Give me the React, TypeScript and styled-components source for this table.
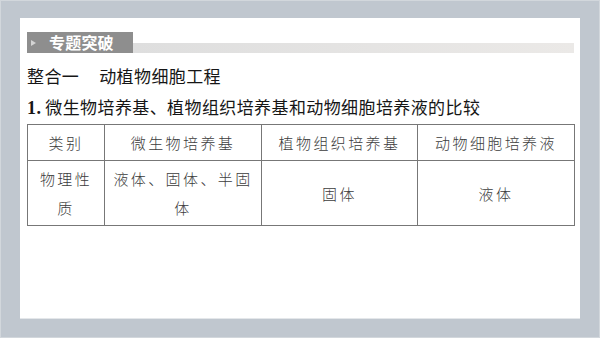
import React from "react";
import styled, { createGlobalStyle } from "styled-components";

const Global = createGlobalStyle`
  html, body { margin: 0; padding: 0; background: #c0c7cf; }
  * { box-sizing: border-box; }
`;

const Frame = styled.div`
  width: 600px;
  height: 338px;
  background: #c0c7cf;
  border: 1px solid #d2d7dc;
  padding: 17px 19px 0 19px;
  font-family: "Noto Sans CJK SC", "Noto Sans", sans-serif;
`;

const Panel = styled.div`
  width: 560px;
  height: 301px;
  background: #ffffff;
  border-bottom: 1px solid #e4e7ea;
  padding: 14px 6px 0 7px;
  display: flex;
  flex-direction: column;
`;

const HeaderRow = styled.div`
  display: flex;
  align-items: flex-end;
  height: 21px;
`;

const Tag = styled.div`
  width: 106px;
  height: 21px;
  background: #8e8e8e;
  display: flex;
  align-items: center;
  padding-left: 4px;
  gap: 13px;
`;

const Arrow = styled.span`
  width: 0;
  height: 0;
  border-top: 3px solid transparent;
  border-bottom: 3px solid transparent;
  border-left: 5px solid #d4d4d4;
`;

const TagText = styled.span`
  color: #ffffff;
  font-size: 16px;
  font-weight: 700;
  line-height: 21px;
  letter-spacing: 0.2px;
`;

const Bar = styled.div`
  flex: 1;
  height: 10px;
  background: linear-gradient(to right, #dedede, #ebe9e7);
`;

const Heading = styled.div<{ $top: number }>`
  margin-top: ${(p) => p.$top}px;
  font-size: 17px;
  line-height: 22px;
  color: #161616;
  white-space: nowrap;
  letter-spacing: 0.4px;
`;

const Gap = styled.span`
  display: inline-block;
  width: 20px;
`;

const Num = styled.span`
  font-family: "Liberation Serif", serif;
  font-weight: 700;
  font-size: 18px;
  margin-right: 4px;
`;

const Table = styled.table`
  margin-top: 5px;
  border-collapse: collapse;
  table-layout: fixed;
  width: 547px;
  border: 1px solid #6e6e6e;
`;

const Cell = styled.td`
  border: 1px solid #777;
  padding: 3px 5px;
  text-align: center;
  vertical-align: middle;
  font-size: 15px;
  font-weight: 300;
  line-height: 29px;
  letter-spacing: 2.4px;
  color: #3c3c3c;
`;

const HeadCell = styled(Cell).attrs({ as: "td" })`
  padding: 3px 5px;
`;

export default function App() {
  return (
    <>
      <Global />
      <Frame>
        <Panel>
          <HeaderRow>
            <Tag>
              <Arrow />
              <TagText>专题突破</TagText>
            </Tag>
            <Bar />
          </HeaderRow>
          <Heading $top={12}>
            整合一<Gap />动植物细胞工程
          </Heading>
          <Heading $top={9}>
            <Num>1.</Num>微生物培养基、植物组织培养基和动物细胞培养液的比较
          </Heading>
          <Table>
            <colgroup>
              <col style={{ width: 77 }} />
              <col style={{ width: 157 }} />
              <col style={{ width: 156 }} />
              <col style={{ width: 157 }} />
            </colgroup>
            <tbody>
              <tr>
                <HeadCell>类别</HeadCell>
                <HeadCell>微生物培养基</HeadCell>
                <HeadCell>植物组织培养基</HeadCell>
                <HeadCell>动物细胞培养液</HeadCell>
              </tr>
              <tr>
                <Cell>物理性质</Cell>
                <Cell>液体、固体、半固体</Cell>
                <Cell>固体</Cell>
                <Cell>液体</Cell>
              </tr>
            </tbody>
          </Table>
        </Panel>
      </Frame>
    </>
  );
}
